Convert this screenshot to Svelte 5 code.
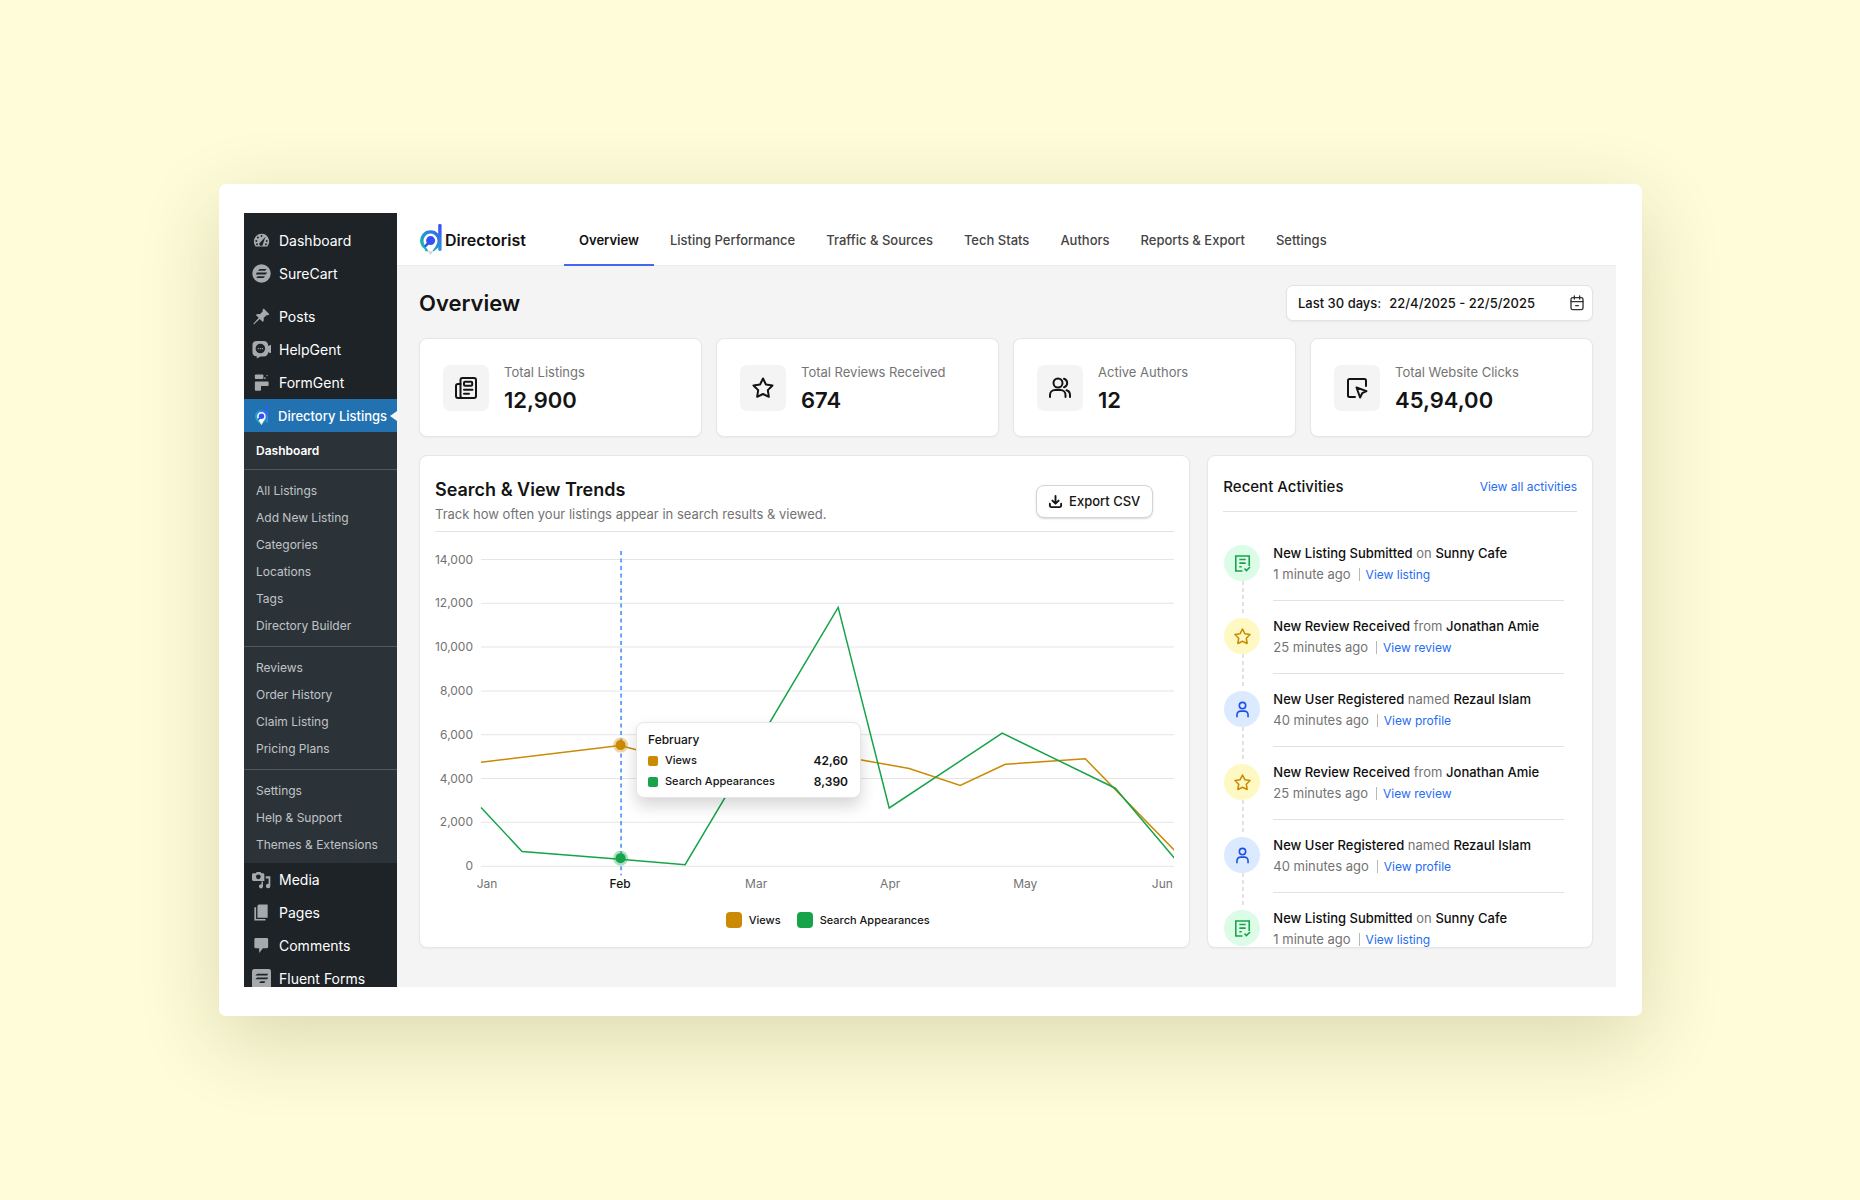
<script lang="ts">
	type Point = [number, number];

	const topMenu = [
		{ label: 'Dashboard', icon: 'gauge' },
		{ label: 'SureCart', icon: 'surecart' }
	];

	const pluginMenu = [
		{ label: 'Posts', icon: 'pin' },
		{ label: 'HelpGent', icon: 'helpgent' },
		{ label: 'FormGent', icon: 'formgent' }
	];

	const submenu = [
		['All Listings', 'Add New Listing', 'Categories', 'Locations', 'Tags', 'Directory Builder'],
		['Reviews', 'Order History', 'Claim Listing', 'Pricing Plans'],
		['Settings', 'Help & Support', 'Themes & Extensions']
	];

	const bottomMenu = [
		{ label: 'Media', icon: 'media' },
		{ label: 'Pages', icon: 'pages' },
		{ label: 'Comments', icon: 'comments' },
		{ label: 'Fluent Forms', icon: 'fluent' }
	];

	const tabs = [
		'Overview',
		'Listing Performance',
		'Traffic & Sources',
		'Tech Stats',
		'Authors',
		'Reports & Export',
		'Settings'
	];
	let activeTab = $state('Overview');

	const stats = [
		{ label: 'Total Listings', value: '12,900', icon: 'news' },
		{ label: 'Total Reviews Received', value: '674', icon: 'star' },
		{ label: 'Active Authors', value: '12', icon: 'users' },
		{ label: 'Total Website Clicks', value: '45,94,00', icon: 'click' }
	];

	const activities = [
		{ kind: 'listing', what: 'New Listing Submitted', word: 'on', who: 'Sunny Cafe', time: '1 minute ago', link: 'View listing' },
		{ kind: 'review', what: 'New Review Received', word: 'from', who: 'Jonathan Amie', time: '25 minutes ago', link: 'View review' },
		{ kind: 'user', what: 'New User Registered', word: 'named', who: 'Rezaul Islam', time: '40 minutes ago', link: 'View profile' },
		{ kind: 'review', what: 'New Review Received', word: 'from', who: 'Jonathan Amie', time: '25 minutes ago', link: 'View review' },
		{ kind: 'user', what: 'New User Registered', word: 'named', who: 'Rezaul Islam', time: '40 minutes ago', link: 'View profile' },
		{ kind: 'listing', what: 'New Listing Submitted', word: 'on', who: 'Sunny Cafe', time: '1 minute ago', link: 'View listing' }
	];

	// Chart geometry, in viewBox units
	const left = 46;
	const right = 739;
	const base = 326;
	const top = 19.5;
	const ticks = [14000, 12000, 10000, 8000, 6000, 4000, 2000, 0];
	const y = (value: number) => base - (value / 14000) * (base - top);

	const months = [
		{ label: 'Jan', x: 52 },
		{ label: 'Feb', x: 185 },
		{ label: 'Mar', x: 321 },
		{ label: 'Apr', x: 455 },
		{ label: 'May', x: 590 },
		{ label: 'Jun', x: 727 }
	];

	const views: Point[] = [
		[46, 4740], [185, 5510], [270, 4500], [360, 5500], [425, 4860], [474, 4460],
		[525, 3680], [570, 4650], [650, 4900], [739, 730]
	];
	const searches: Point[] = [
		[46, 2680], [87, 670], [185, 320], [250, 70], [403, 11810], [454, 2660],
		[567, 6070], [680, 3560], [739, 370]
	];
	const line = (points: Point[]) => points.map(([x, value]) => `${x},${y(value).toFixed(1)}`).join(' ');
</script>

{#snippet logo(id: string)}
	<svg class="logo-mark" viewBox="0 0 22 31" aria-hidden="true">
		<defs>
			<linearGradient id="{id}-ring" x1="0" y1="1" x2="1" y2="0">
				<stop offset="0" stop-color="#12c99b" />
				<stop offset="0.5" stop-color="#2496d0" />
				<stop offset="1" stop-color="#3b5bfa" />
			</linearGradient>
			<linearGradient id="{id}-bar" x1="0" y1="0" x2="0" y2="1">
				<stop offset="0" stop-color="#3d4bff" />
				<stop offset="1" stop-color="#2c9ad6" />
			</linearGradient>
		</defs>
		<path d="M5.500 27.200 4.500 25.100A10.400 10.400 0 1 1 16.500 25.100L14 27.200Z" fill="url(#{id}-ring)" />
		<rect x="18.200" y="0" width="3.400" height="27" rx="1.400" fill="url(#{id}-bar)" />
		<path d="M10.500 9.600a7 7 0 0 0-7 7c0 5 4 8 7 14.200 3-6.200 7-9.200 7-14.200a7 7 0 0 0-7-7Z" fill="#fff" />
		<path d="M7.800 27.200h5.400L10.500 31Z" fill="#d4d6da" />
		<path d="m8.600 18.900-3 3" stroke="#3450f6" stroke-width="2.600" stroke-linecap="round" />
		<circle cx="10.600" cy="16.600" r="4.500" fill="#3450f6" />
	</svg>
{/snippet}

{#snippet menuIcon(name: string)}
	<svg class="menu-icon" viewBox="0 0 20 20" aria-hidden="true">
		{#if name === 'gauge'}
			<path d="M10 3a8 8 0 0 0-8 8c0 2 .7 3.800 1.900 5.200h12.200A8 8 0 0 0 10 3Z" />
			<g class="cut">
				<circle cx="10" cy="5.300" r="1" /><circle cx="6.200" cy="6.800" r="1" /><circle cx="4.500" cy="10.500" r="1" />
				<circle cx="15.500" cy="10.500" r="1" /><circle cx="5.300" cy="14" r="1" /><circle cx="14.700" cy="14" r="1" />
				<path d="m14.200 6-2.600 7.400a2 2 0 1 1-2.700-1.600Z" />
			</g>
		{:else if name === 'surecart'}
			<circle cx="10" cy="10" r="9.700" />
			<path class="cut" d="M8.200 5.200h7.300l-1.800 2H6.400Q7 5.700 8.200 5.200ZM5 9h11l-1.600 2H4Zm1 3.800h7.600q-.7 1.700-2 2H4.400Z" />
		{:else if name === 'pin'}
			<path d="m12.300 1.700 6 6-1.500 1.100-1.600-.2-3 3c.5 1.700.2 3-.7 4.200l-3.300-3.300L2 18.300l-.6-.6 5.700-6.300L4 8.300c1.200-.9 2.600-1.100 4.200-.6l3-3-.1-1.600Z" />
		{:else if name === 'helpgent'}
			<path d="M5 1h7.500A4.500 4.500 0 0 1 17 5.500v.8l3-1.300v9l-3-1.200a4.500 4.500 0 0 1-4.500 4.500H9L5 19.500v-2.300A4.600 4.600 0 0 1 .5 12.600v-7A4.600 4.600 0 0 1 5 1Z" />
			<circle class="cut" cx="8.800" cy="9" r="5" />
			<path d="M6 8.400h1.200v1.300H6Zm2.200 0h1.200v1.300H8.200Zm2.200 0h1.200v1.300h-1.200Z" />
		{:else if name === 'formgent'}
			<rect x="3" y="1.500" width="9" height="4.800" rx="1" /><circle cx="13.600" cy="5.300" r=".9" /><circle cx="15.800" cy="2.700" r=".7" />
			<path d="M4 9h12.500q1 0 1 1v2.600q0 1-1 1H9.500v4q0 1-1 1H4q-1 0-1-1V10q0-1 1-1Z" />
		{:else if name === 'media'}
			<path d="M1.500 3.500H4L5 2h4l1 1.500h1.500A1.500 1.500 0 0 1 13 5v6.500H1.500Q0 11.500 0 10V5q0-1.500 1.500-1.500Z" />
			<circle class="cut" cx="6.700" cy="7.200" r="2.500" />
			<path d="M14.500 6.500h4.800v10.300a2.300 2.300 0 1 1-1.800-2.200V9h-3ZM11.500 12v6a2.200 2.200 0 1 1-1.500-3v-3Z" />
		{:else if name === 'pages'}
			<path d="M7 1.500h9.500v14H5.700V3Z" /><path d="M2.500 4.500h1.800v12.300h9.900v1.700H2.500Z" />
		{:else if name === 'comments'}
			<path d="M4 2h11.500q1.500 0 1.500 1.500v8q0 1.500-1.500 1.500H11.500L7.500 18v-5H4q-1.500 0-1.500-1.500v-8Q2.500 2 4 2Z" />
		{:else}
			<rect width="20" height="20" rx="2.500" />
			<path class="cut" d="M5.500 5H17l-1 1.800H3.500Zm0 4H17l-1 1.800H3.500Zm3.500 4h5l-1 1.800H7.500Z" />
		{/if}
	</svg>
{/snippet}

{#snippet icon(name: string)}
	<svg class="icon" viewBox="0 0 24 24" aria-hidden="true">
		{#if name === 'news'}
			<rect x="6.500" y="2" width="15.500" height="20" rx="2" />
			<path d="M6.500 8H4a2 2 0 0 0-2 2v10a2 2 0 0 0 2 2h5M10 13.800h8.500M10 17.800h5" />
			<rect x="10" y="5.800" width="8.200" height="4" rx="1" />
		{:else if name === 'star' || name === 'review'}
			<path d="m12 2.500 2.950 5.950 6.550 1-4.700 4.700 1.050 6.650L12 18l-5.850 2.800 1.050-6.650-4.700-4.700 6.550-1Z" />
		{:else if name === 'users'}
			<circle cx="10" cy="7" r="4.500" />
			<path d="M2 21v-2a5 5 0 0 1 5-5h5.500a5 5 0 0 1 5 5v2M16 2.700a4.500 4.500 0 0 1 0 8.600M18.500 14.300a5 5 0 0 1 3.500 4.800V21" />
		{:else if name === 'click'}
			<path d="M10 21H4.500A1.500 1.500 0 0 1 3 19.500v-15A1.500 1.500 0 0 1 4.500 3h15A1.500 1.500 0 0 1 21 4.500V10" />
			<path d="m11.500 11.500 10 3.600-4.300 2.100-2.100 4.300Z" />
		{:else if name === 'user'}
			<circle cx="12" cy="7" r="4" />
			<path d="M5 21v-2.500A4.500 4.500 0 0 1 9.500 14h5a4.500 4.500 0 0 1 4.500 4.500V21" />
		{:else if name === 'listing'}
			<path d="M12 21.500H3.500v-19h17V15M8 7h8M8 11.500h8M8 16h3M14.500 18.500l2.500 2.500 4.500-4.500" />
		{:else if name === 'download'}
			<path d="M12 3v12M7 10.500l5 5 5-5M3 15.500v3A2.500 2.500 0 0 0 5.500 21h13a2.500 2.500 0 0 0 2.500-2.500v-3" />
		{:else if name === 'calendar'}
			<rect x="3" y="4" width="18" height="18" rx="2.500" />
			<path d="M3 10h18M8 1.500V6M16 1.500V6M10 16h4" />
		{/if}
	</svg>
{/snippet}

{#snippet menuItem(item: { label: string; icon: string })}
	<li>
		<a class="menu-link" href="#{item.icon}">
			{@render menuIcon(item.icon)}
			{item.label}
		</a>
	</li>
{/snippet}

<div class="stage">
	<div class="frame">
		<nav class="sidebar" aria-label="Admin menu">
			<ul>
				{#each topMenu as item}
					{@render menuItem(item)}
				{/each}
			</ul>
			<ul class="spaced">
				{#each pluginMenu as item}
					{@render menuItem(item)}
				{/each}
				<li>
					<a class="menu-link current" href="#directory">
						<span class="menu-icon small-logo">{@render logo('menu')}</span>
						Directory Listings
					</a>
				</li>
			</ul>
			<div class="submenu">
				<ul class="first">
					<li><a class="sub-link selected" href="#dashboard">Dashboard</a></li>
				</ul>
				{#each submenu as group}
					<ul>
						{#each group as label}
							<li><a class="sub-link" href="#sub">{label}</a></li>
						{/each}
					</ul>
				{/each}
			</div>
			<ul>
				{#each bottomMenu as item}
					{@render menuItem(item)}
				{/each}
			</ul>
		</nav>

		<div class="content">
			<header class="topbar">
				<a class="brand" href="#home">
					{@render logo('brand')}
					<span>Directorist</span>
				</a>
				<nav class="tabs" aria-label="Analytics">
					{#each tabs as tab}
						<a
							class="tab"
							class:active={tab === activeTab}
							href="#tab"
							onclick={() => (activeTab = tab)}>{tab}</a
						>
					{/each}
				</nav>
			</header>

			<main>
				<div class="title-row">
					<h1>Overview</h1>
					<button class="range" type="button">
						<span>Last 30 days:</span>
						<span class="dates">22/4/2025 - 22/5/2025</span>
						{@render icon('calendar')}
					</button>
				</div>

				<section class="stats">
					{#each stats as stat}
						<div class="card stat">
							<span class="stat-icon">{@render icon(stat.icon)}</span>
							<div class="stat-text">
								<div class="stat-label">{stat.label}</div>
								<div class="stat-value">{stat.value}</div>
							</div>
						</div>
					{/each}
				</section>

				<div class="panels">
					<section class="card trends">
						<div class="trends-head">
							<div>
								<h2>Search &amp; View Trends</h2>
								<p>Track how often your listings appear in search results &amp; viewed.</p>
							</div>
							<button class="export" type="button">
								{@render icon('download')}
								Export CSV
							</button>
						</div>

						<div class="chart">
							<svg viewBox="0 0 739 355" role="img" aria-label="Views and search appearances by month">
								{#each ticks as tick}
									<line class="grid" x1={left} x2={right} y1={y(tick)} y2={y(tick)} />
									<text class="tick" x="38" y={y(tick) + 4} text-anchor="end">{tick.toLocaleString('en-US')}</text>
								{/each}
								{#each months as month}
									<text class="tick" class:now={month.label === 'Feb'} x={month.x} y="348" text-anchor="middle">
										{month.label}
									</text>
								{/each}
								<line class="cursor" x1="186" x2="186" y1="11" y2="335" />
								<polyline class="views" points={line(views)} />
								<polyline class="searches" points={line(searches)} />
								<circle class="dot-views" cx="185.500" cy="205" r="5" />
								<circle class="dot-searches" cx="185.500" cy="318" r="5" />
							</svg>

							<div class="tooltip">
								<strong>February</strong>
								<div class="row"><i class="swatch amber"></i>Views<b>42,60</b></div>
								<div class="row"><i class="swatch green"></i>Search Appearances<b>8,390</b></div>
							</div>
						</div>

						<div class="legend">
							<span><i class="swatch amber"></i>Views</span>
							<span><i class="swatch green"></i>Search Appearances</span>
						</div>
					</section>

					<section class="card activity">
						<div class="activity-head">
							<h3>Recent Activities</h3>
							<a href="#activities">View all activities</a>
						</div>
						<ol class="feed">
							{#each activities as item}
								<li>
									<div class="marker">
										<span class="badge {item.kind}">{@render icon(item.kind)}</span>
									</div>
									<div class="entry">
										<p class="what"><b>{item.what}</b> {item.word} <b>{item.who}</b></p>
										<p class="meta"><span>{item.time}</span><a href="#view">{item.link}</a></p>
									</div>
								</li>
							{/each}
						</ol>
					</section>
				</div>
			</main>
		</div>
	</div>
</div>

<style>
	:global(body) {
		margin: 0;
		background: #fefcd9;
	}

	* {
		box-sizing: border-box;
	}

	ul,
	ol,
	p,
	h1,
	h2,
	h3 {
		margin: 0;
		padding: 0;
		list-style: none;
	}

	a {
		text-decoration: none;
	}

	button {
		font: inherit;
		color: inherit;
		background: #fff;
	}

	.stage {
		display: flex;
		min-height: 100vh;
		padding: 184px 218px 184px 219px;
		font-family: Inter, 'Liberation Sans', sans-serif;
		font-size: 13px;
		line-height: 20px;
		color: #141414;
	}

	.frame {
		display: flex;
		width: 100%;
		padding: 29px 26px 29px 25px;
		border-radius: 7px;
		background: #fff;
		box-shadow: 0 24px 80px rgba(80, 74, 20, 0.2);
	}

	/* Sidebar is clipped to the height of the content beside it */
	.sidebar {
		flex: none;
		width: 153px;
		padding-top: 11px;
		overflow: hidden;
		contain: size;
		background: #1d2327;
	}

	.spaced {
		margin-top: 10px;
	}

	.menu-link {
		position: relative;
		display: flex;
		align-items: center;
		gap: 8px;
		height: 33px;
		padding-left: 8px;
		font-size: 14px;
		white-space: nowrap;
		color: #fff;
	}

	.menu-link.current {
		gap: 7px;
		font-size: 13px;
		font-weight: 500;
		background: #2271b1;
	}

	.menu-link.current::after {
		content: '';
		position: absolute;
		top: 12px;
		right: 0;
		border: 5px solid transparent;
		border-left: 0;
		border-right: 7px solid #f4f4f4;
	}

	.menu-icon {
		flex: none;
		width: 19px;
		height: 19px;
		fill: #a7aaad;
	}

	.menu-icon .cut {
		fill: #1d2327;
	}

	.small-logo {
		display: flex;
		justify-content: center;
	}

	.small-logo .logo-mark {
		height: 19px;
	}

	.submenu {
		background: #2c3338;
	}

	.submenu ul {
		padding: 7px 0;
		border-top: 1px solid #50575d;
	}

	.submenu .first {
		padding: 5px 0;
		border-top: 0;
	}

	.submenu ul:last-child {
		padding-bottom: 5px;
	}

	.sub-link {
		display: block;
		padding-left: 12px;
		font-size: 12px;
		line-height: 27px;
		white-space: nowrap;
		color: #c0c4c8;
	}

	.sub-link.selected {
		font-weight: 600;
		color: #fff;
	}

	.content {
		flex: 1;
		min-width: 0;
		background: #f4f4f4;
	}

	.topbar {
		display: flex;
		height: 53px;
		padding-left: 23px;
		border-bottom: 1px solid #ececec;
		background: #fff;
	}

	.brand {
		display: flex;
		align-items: center;
		gap: 3px;
		width: 144px;
		padding-top: 1px;
		font-size: 16px;
		font-weight: 600;
		color: #111;
	}

	.brand .logo-mark {
		width: 22px;
		height: 31px;
	}

	.tabs {
		display: flex;
		gap: 1px;
	}

	.tab {
		height: 53px;
		padding: 1px 15px 0;
		border-bottom: 2px solid transparent;
		font-weight: 500;
		line-height: 53px;
		white-space: nowrap;
		color: #444;
	}

	.tab.active {
		border-color: #4766ee;
		font-weight: 600;
		color: #111;
	}

	main {
		padding: 19px 23px 39px 22px;
	}

	.title-row {
		display: flex;
		align-items: center;
		justify-content: space-between;
	}

	h1 {
		font-size: 22px;
		font-weight: 600;
		line-height: 28px;
	}

	.icon {
		flex: none;
		fill: none;
		stroke: currentColor;
		stroke-width: 2;
		stroke-linecap: round;
		stroke-linejoin: round;
	}

	.range {
		display: flex;
		align-items: center;
		gap: 8px;
		width: 307px;
		height: 36px;
		padding: 0 7px 0 11px;
		border: 1px solid #e3e3e3;
		border-radius: 7px;
		font-weight: 500;
		box-shadow: 0 1px 2px rgba(0, 0, 0, 0.05);
	}

	.dates {
		flex: 1;
		text-align: left;
	}

	.range .icon {
		width: 16px;
		height: 16px;
		color: #333;
	}

	.card {
		border: 1px solid #e6e6e6;
		border-radius: 8px;
		background: #fff;
		box-shadow: 0 1px 2px rgba(0, 0, 0, 0.04);
	}

	.stats {
		display: grid;
		grid-template-columns: repeat(4, 1fr);
		gap: 14px;
		margin-top: 17px;
	}

	.stat {
		display: flex;
		align-items: center;
		gap: 15px;
		height: 99px;
		padding-left: 23px;
	}

	.stat-icon {
		display: grid;
		place-items: center;
		width: 46px;
		height: 46px;
		border-radius: 7px;
		background: #f4f4f4;
	}

	.stat-icon .icon {
		width: 24px;
		height: 24px;
	}

	.stat-text {
		padding-top: 2px;
	}

	.stat-label {
		font-size: 13px;
		color: #747474;
	}

	.stat-value {
		margin-top: 2px;
		font-size: 22px;
		font-weight: 600;
		line-height: 32px;
	}

	.panels {
		display: grid;
		grid-template-columns: 2fr 1fr;
		gap: 17px;
		margin-top: 18px;
	}

	.trends {
		padding: 22px 15px 19px;
	}

	.trends-head {
		display: flex;
		align-items: center;
		justify-content: space-between;
		padding: 0 21px 7px 0;
		border-bottom: 1px solid #e2e2e2;
	}

	h2 {
		font-size: 18px;
		font-weight: 600;
		line-height: 24px;
	}

	.trends-head p {
		margin-top: 2px;
		color: #737373;
	}

	.export {
		display: flex;
		align-items: center;
		gap: 6px;
		height: 33px;
		padding: 0 12px 0 11px;
		border: 1px solid #d4d4d4;
		border-radius: 8px;
		font-weight: 500;
		box-shadow: 0 1px 2px rgba(0, 0, 0, 0.15);
	}

	.export .icon {
		width: 15px;
		height: 15px;
		stroke-width: 3;
	}

	.chart {
		position: relative;
		margin-top: 8px;
	}

	.chart svg {
		display: block;
		width: 100%;
	}

	.grid {
		stroke: #e5e5e5;
		stroke-width: 1;
	}

	.tick {
		font-size: 12px;
		fill: #737373;
	}

	.tick.now {
		font-weight: 500;
		fill: #141414;
	}

	.cursor {
		stroke: #6ba0fb;
		stroke-width: 2;
		stroke-dasharray: 4 3.500;
	}

	polyline {
		fill: none;
		stroke-width: 1.500;
	}

	.views {
		stroke: #ca8a04;
	}

	.searches {
		stroke: #16a34a;
	}

	.dot-views,
	.dot-searches {
		fill: #ca8a04;
		stroke: rgba(202, 138, 4, 0.35);
		stroke-width: 5;
		paint-order: stroke;
	}

	.dot-searches {
		fill: #16a34a;
		stroke: rgba(22, 163, 74, 0.35);
	}

	.tooltip {
		position: absolute;
		top: 182px;
		left: 201px;
		width: 225px;
		padding: 6px 12px 5px 11px;
		border: 1px solid #e5e5e5;
		border-radius: 8px;
		background: #fff;
		box-shadow: 0 8px 16px rgba(0, 0, 0, 0.16);
		font-size: 11px;
		font-weight: 500;
		line-height: 21px;
	}

	.tooltip strong {
		display: block;
		font-size: 12px;
		font-weight: 500;
	}

	.row {
		display: flex;
		align-items: center;
		gap: 7px;
	}

	.row b {
		margin-left: auto;
		font-size: 12px;
		font-weight: 600;
	}

	.swatch {
		width: 10px;
		height: 10px;
		border-radius: 2px;
	}

	.amber {
		background: #ca8a04;
	}

	.green {
		background: #16a34a;
	}

	.legend {
		display: flex;
		justify-content: center;
		gap: 16px;
		margin-top: 17px;
		padding-left: 46px;
		font-size: 11px;
		font-weight: 500;
		line-height: 16px;
	}

	.legend span {
		display: flex;
		align-items: center;
		gap: 7px;
	}

	.legend .swatch {
		width: 16px;
		height: 16px;
		border-radius: 4px;
	}

	.activity {
		display: flex;
		flex-direction: column;
		padding: 21px 15px 0;
		overflow: hidden;
	}

	.activity-head {
		display: flex;
		align-items: center;
		justify-content: space-between;
		padding-bottom: 14px;
		border-bottom: 1px solid #e2e2e2;
	}

	h3 {
		font-size: 15px;
		font-weight: 500;
		line-height: 20px;
	}

	.activity a {
		font-size: 12px;
		color: #1f6df2;
	}

	/* The feed runs on under the card's lower edge */
	.feed {
		flex: 1;
		padding: 31px 13px 0 1px;
		contain: size;
	}

	.feed li {
		display: flex;
		gap: 13px;
	}

	.marker {
		display: flex;
		flex-direction: column;
		align-items: center;
		width: 36px;
		padding-top: 2px;
	}

	.feed li:not(:last-child) .marker::after {
		content: '';
		flex: 1;
		width: 2px;
		margin-left: 2px;
		background: repeating-linear-gradient(#e2e2e2 0 4px, transparent 4px 7px);
	}

	.badge {
		display: grid;
		place-items: center;
		width: 36px;
		height: 36px;
		border-radius: 50%;
	}

	.badge .icon {
		width: 19px;
		height: 19px;
	}

	.badge.listing {
		color: #16a34a;
		background: #dcfce7;
	}

	.badge.listing .icon {
		stroke-linecap: butt;
		stroke-linejoin: miter;
	}

	.badge.review {
		color: #ca8a04;
		background: #fef9c3;
	}

	.badge.user {
		color: #1d4fe8;
		background: #dbeafe;
	}

	.entry {
		flex: 1;
		margin-bottom: 15px;
		padding-bottom: 16px;
		border-bottom: 1px solid #e2e2e2;
	}

	.what {
		color: #737373;
		white-space: nowrap;
	}

	.what b {
		font-weight: 500;
		color: #0f0f0f;
	}

	.meta {
		display: flex;
		align-items: center;
		margin-top: 1px;
		color: #737373;
	}

	.meta a {
		margin-left: 8px;
		padding-left: 6px;
		border-left: 1px solid #b8b8b8;
		line-height: 13px;
	}
</style>
